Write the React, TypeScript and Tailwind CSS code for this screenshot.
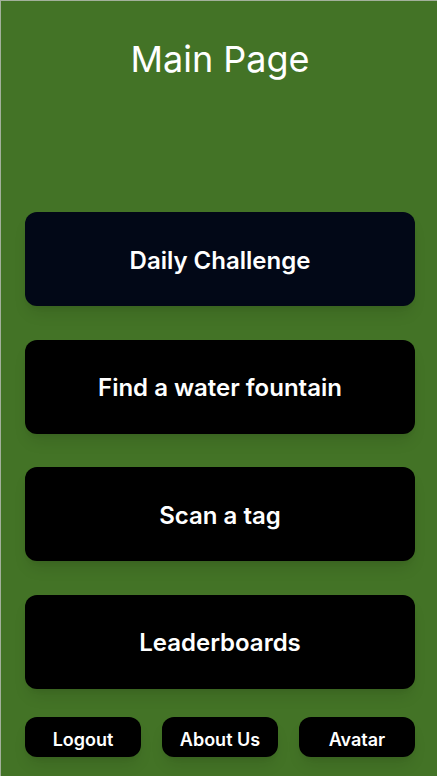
export default function App() {
  const actions = ["Daily Challenge", "Find a water fountain", "Scan a tag", "Leaderboards"]
  const footer = ["Logout", "About Us", "Avatar"]

  return (
    <div
      className="w-[437px] h-[776px] bg-[#437326] border-t border-l border-[#a3b09b] flex flex-col pl-[24px] pr-[22px] overflow-hidden"
      style={{ fontFamily: "Inter, 'Noto Sans', sans-serif" }}
    >
      {/* Title */}
      <h1 className="text-white text-[36px] font-normal text-center mt-[36px] leading-[44px]">Main Page</h1>

      {/* Main actions */}
      <div className="flex flex-col gap-[33.5px] mt-[131px]">
        {actions.map((label, i) => (
          <button
            key={label}
            className={`h-[94px] w-full rounded-[12px] pt-[3px] text-white text-[24px] font-semibold shadow-lg ${
              i === 0 ? "bg-[#020817]" : "bg-black"
            }`}
          >
            {label}
          </button>
        ))}
      </div>

      {/* Footer buttons */}
      <div className="flex justify-between mt-[28px]">
        {footer.map((label) => (
          <button
            key={label}
            className="w-[116px] h-[40px] rounded-[12px] pt-[6px] bg-black text-white text-[18px] font-semibold shadow-lg"
          >
            {label}
          </button>
        ))}
      </div>
    </div>
  )
}
